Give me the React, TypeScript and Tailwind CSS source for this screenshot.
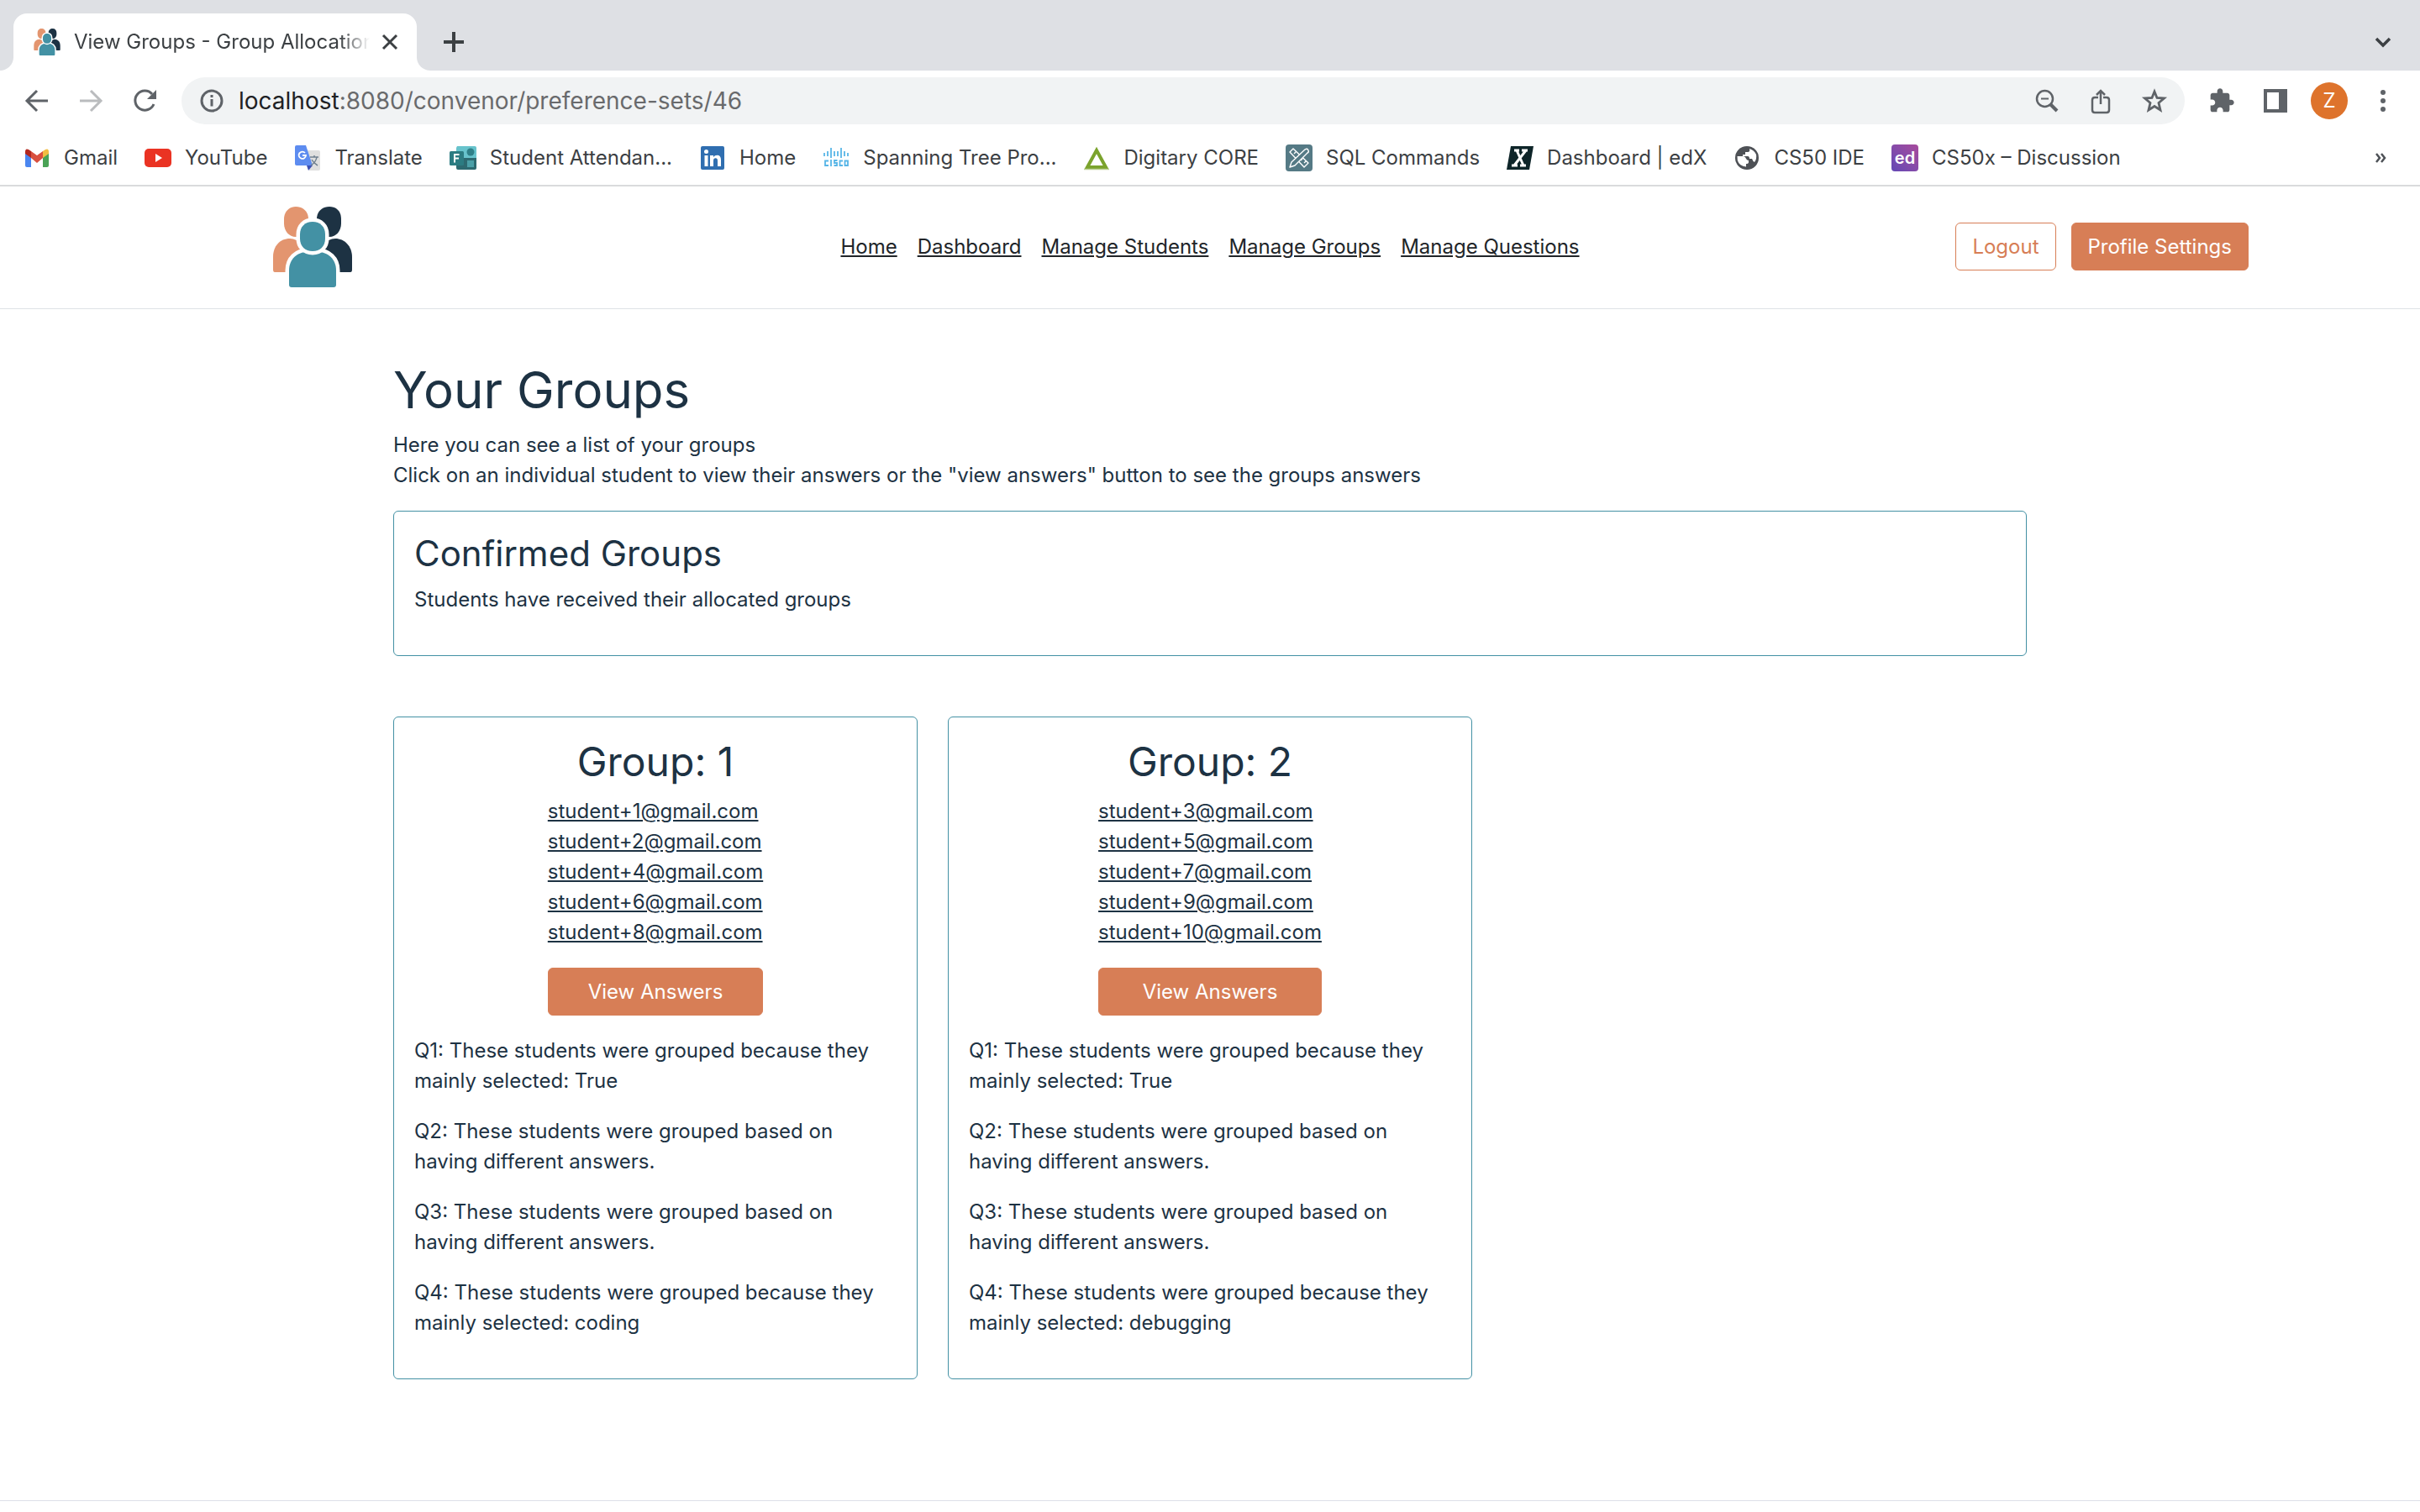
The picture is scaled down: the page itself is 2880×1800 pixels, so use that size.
import type { ReactNode } from "react";

function PeopleLogo({ className }: { className: string }) {
  return (
    <svg viewBox="0 0 96 96" className={className} aria-hidden="true">
      <g fill="#e3956f">
        <path d="M28 0C37 0 43 6 43 15V21C43 30 37 36 28 36C20 36 14 29 14 20V15C14 6 20 0 28 0Z" />
        <path d="M1 75V60C1 47 9 38 21 38Q29 38 36 46L34 62L17 78H3Q1 78 1 75Z" />
      </g>
      <g fill="#1d3243">
        <path d="M68 0C77 0 82 6 82 15V20C82 29 76 36 68 36C59 36 53 30 53 21V15C53 6 59 0 68 0Z" />
        <path d="M95 75V60C95 47 86 38 75 38Q67 38 60 46L62 62L79 78H93Q95 78 95 75Z" />
      </g>
      <g fill="#4391a4" stroke="#fff" strokeWidth="9" paintOrder="stroke">
        <path d="M20 93V76C20 62 30 54 42 54H54C66 54 76 62 76 76V93Q76 96 73 96H23Q20 96 20 93Z" />
        <path d="M48 18C57 18 63 24 63 33V38C63 47 57 53 48 53C39 53 33 47 33 38V33C33 24 39 18 48 18Z" />
      </g>
    </svg>
  );
}

const icon = "size-8 shrink-0";

const bookmarks: { label: string; art: ReactNode }[] = [
  {
    label: "Gmail",
    art: (
      <svg viewBox="0 0 32 32" className={icon} aria-hidden="true">
        <path fill="#4a86f0" d="M2 9L9 14V27H4Q2 27 2 25Z" />
        <path fill="#4aa356" d="M30 9L23 14V27H28Q30 27 30 25Z" />
        <path fill="#f2bd42" d="M23 8L26 6Q30 4 30 9V11L23 16Z" />
        <path fill="#b3281e" d="M9 8L6 6Q2 4 2 9V11L9 16Z" />
        <path fill="#d9503f" d="M9 8L16 13L23 8V16L16 22L9 16Z" />
      </svg>
    ),
  },
  {
    label: "YouTube",
    art: (
      <svg viewBox="0 0 32 32" className={icon} aria-hidden="true">
        <rect y="5" width="32" height="22" rx="5" fill="#ea3323" />
        <path d="M13 11L21 16L13 21Z" fill="#fff" />
      </svg>
    ),
  },
  {
    label: "Translate",
    art: (
      <svg viewBox="0 0 32 32" className={icon} aria-hidden="true">
        <path fill="#dfdfdf" d="M13 7H29Q31 7 31 9V29Q31 31 29 31H18Z" />
        <path fill="#3c50b5" d="M15 25H22L17 31Z" />
        <path fill="#5d8cf0" d="M3 1H14L22 25H3Q1 25 1 23V3Q1 1 3 1Z" />
        <path d="M19 15H29M24 13V15M27 15Q26 21 20 25M21 18Q23 22 28 25" stroke="#708090" strokeWidth="1.5" fill="none" />
        <path d="M13 10A4.2 4.2 0 1 0 14 13H10" stroke="#fff" strokeWidth="1.8" fill="none" />
      </svg>
    ),
  },
  {
    label: "Student Attendan...",
    art: (
      <svg viewBox="0 0 32 32" className={icon} aria-hidden="true">
        <path fill="#67c3cc" d="M9 2H30Q32 2 32 4V16H8V4Z" />
        <path fill="#2d6a71" d="M8 16H32V28Q32 30 30 30H10Q8 30 8 28Z" />
        <rect x="21" y="19" width="8" height="8" fill="#4ba0a8" />
        <circle cx="25" cy="9" r="4.500" fill="#2f8088" />
        <rect x="0" y="8" width="17" height="17" rx="1.500" fill="#2c7c82" />
        <path d="M6 21.500V12H11.500M6 16.500H11" stroke="#fff" strokeWidth="2" fill="none" />
      </svg>
    ),
  },
  {
    label: "Home",
    art: (
      <svg viewBox="0 0 32 32" className={icon} aria-hidden="true">
        <rect x="2" y="2" width="28" height="28" rx="2" fill="#2f6eb0" />
        <circle cx="8.500" cy="8.500" r="2.500" fill="#fff" />
        <path d="M6.500 13H10.500V26H6.500ZM13 13H17V15Q18.500 12.700 21.500 12.700Q26 12.700 26 18.500V26H22V19.500Q22 16.300 19.600 16.300Q17 16.300 17 19.500V26H13Z" fill="#fff" />
      </svg>
    ),
  },
  {
    label: "Spanning Tree Pro...",
    art: (
      <svg viewBox="0 0 32 32" className={icon} aria-hidden="true">
        <path d="M2 10V14M6 8V14M10 4V16M14 8V14M18 8V14M22 4V16M26 8V14M30 10V14" stroke="#58b6e7" strokeWidth="1.800" />
        <path d="M7 19.500H3V25H7M10 18V26M17.500 19H14V22H17V25H13.500M24 19.500H20.500V25H24M26.500 19.500H30V25H26.500Z" stroke="#58b6e7" strokeWidth="1.800" fill="none" />
      </svg>
    ),
  },
  {
    label: "Digitary CORE",
    art: (
      <svg viewBox="0 0 32 32" className={icon} aria-hidden="true">
        <path d="M16 7L27 27H5Z" fill="none" stroke="#7ba32d" strokeWidth="4" />
        <path d="M1 29.500H31" stroke="#bcd096" strokeWidth="1.500" />
      </svg>
    ),
  },
  {
    label: "SQL Commands",
    art: (
      <svg viewBox="0 0 32 32" className={icon} aria-hidden="true">
        <rect width="32" height="32" rx="4" fill="#557a85" />
        <g fill="#557a85" stroke="#fff" strokeWidth="1.400" strokeLinejoin="round">
          <path d="M9 5L27 22L22 27L5 9ZM12 9L10 11M24 20L22 22M20 17L18 19" />
          <path d="M23 6Q26 4 27 7Q28 9 26 10L11 25L5 27L7 21Z" />
        </g>
      </svg>
    ),
  },
  {
    label: "Dashboard | edX",
    art: (
      <svg viewBox="0 0 32 32" className={icon} aria-hidden="true">
        <path d="M5 2H32L27 30H0Z" fill="#0e2529" />
        <path d="M9 7H15M18 7H25M6 25H13M16 25H23M12 7L20 25M23 7L9 25" stroke="#fff" strokeWidth="3" fill="none" />
      </svg>
    ),
  },
  {
    label: "CS50 IDE",
    art: (
      <svg viewBox="0 0 32 32" className={icon} aria-hidden="true">
        <circle cx="16" cy="16" r="14" fill="#4e5156" />
        <path d="M4.500 14H11Q14 14 15 17Q16 19 18 19V21Q18 23 15 23V26.500Q7 26 4.800 19Z" fill="#fff" />
        <path d="M19 5Q20 9 17 9H14V12H11V14H17Q19 14 19 17H22Q23 20 25 21Q28 17 27 12Q25 7 19 5Z" fill="#fff" />
      </svg>
    ),
  },
  {
    label: "CS50x – Discussion",
    art: (
      <span className="flex size-8 shrink-0 items-center justify-center rounded-sm bg-linear-to-tr from-[#6347b5] to-[#a84a9c] text-xl font-semibold text-white" aria-hidden="true">
        ed
      </span>
    ),
  },
];

function BrowserChrome() {
  return (
    <header className="border-b-2 border-[#dadbdc] bg-white text-[#3c4043]">
      <div className="flex h-[84px] items-end bg-[#dee0e4]">
        <div className="h-4 w-4 bg-white">
          <div className="h-4 w-4 rounded-br-2xl bg-[#dee0e4]" />
        </div>
        <div className="flex h-[68px] w-[480px] items-center rounded-t-2xl bg-white pr-5 pl-6">
          <PeopleLogo className="size-8 shrink-0" />
          <span className="ml-4 min-w-0 flex-1 overflow-hidden mask-r-from-90% mask-r-to-100% text-2xl whitespace-nowrap">
            View Groups - Group Allocation
          </span>
          <button aria-label="Close tab" className="ml-3">
            <svg viewBox="0 0 24 24" className="size-6" aria-hidden="true">
              <path d="M4 4L20 20M20 4L4 20" stroke="#3c4043" strokeWidth="3" />
            </svg>
          </button>
        </div>
        <div className="h-4 w-4 bg-white">
          <div className="h-4 w-4 rounded-bl-2xl bg-[#dee0e4]" />
        </div>
        <button aria-label="New tab" className="mb-[22px] ml-4">
          <svg viewBox="0 0 24 24" className="size-6" aria-hidden="true">
            <path d="M12 0V24M0 12H24" stroke="#3c4043" strokeWidth="4" />
          </svg>
        </button>
        <button aria-label="Search tabs" className="mr-[34px] mb-[22px] ml-auto">
          <svg viewBox="0 0 20 24" className="h-6 w-5" aria-hidden="true">
            <path d="M2 8L10 16L18 8" stroke="#3c4043" strokeWidth="3.500" fill="none" />
          </svg>
        </button>
      </div>
      <div className="flex h-[72px] items-center pr-7 pl-7">
        <button aria-label="Back">
          <svg viewBox="0 0 32 32" className="size-8" aria-hidden="true">
            <path d="M29 16H5M16 4L4 16L16 28" stroke="#5f6368" strokeWidth="3" fill="none" />
          </svg>
        </button>
        <button aria-label="Forward" className="ml-8">
          <svg viewBox="0 0 32 32" className="size-8" aria-hidden="true">
            <path d="M3 16H27M16 4L28 16L16 28" stroke="#babcbe" strokeWidth="3" fill="none" />
          </svg>
        </button>
        <button aria-label="Reload" className="ml-8">
          <svg viewBox="0 0 32 32" className="size-8" aria-hidden="true">
            <path d="M27 20A11.500 11.500 0 1 1 25 8" stroke="#5f6368" strokeWidth="3" fill="none" />
            <path d="M30 3V14H19Z" fill="#5f6368" />
          </svg>
        </button>
        <div className="ml-7 flex h-14 flex-1 items-center rounded-full bg-[#f1f3f4] pr-5 pl-5">
          <svg viewBox="0 0 32 32" className="size-8" aria-hidden="true">
            <circle cx="16" cy="16" r="12" stroke="#5f6368" strokeWidth="3" fill="none" />
            <path d="M16 14V22.500M16 9V12" stroke="#5f6368" strokeWidth="3" />
          </svg>
          <span className="ml-4 flex-1 text-[28px] text-[#696a6c]">
            <span className="text-[#202124]">localhost</span>:8080/convenor/preference-sets/46
          </span>
          <div className="flex items-center gap-8">
            <button aria-label="Zoom">
              <svg viewBox="0 0 32 32" className="size-8" aria-hidden="true">
                <circle cx="13.500" cy="13.500" r="9.500" stroke="#5f6368" strokeWidth="2.500" fill="none" />
                <path d="M9 13.500H18" stroke="#5f6368" strokeWidth="2" />
                <path d="M20 20L28 28" stroke="#5f6368" strokeWidth="4" />
              </svg>
            </button>
            <button aria-label="Share">
              <svg viewBox="0 0 32 32" className="size-8" aria-hidden="true">
                <path d="M13 12H9Q6 12 6 15V27Q6 30 9 30H23Q26 30 26 27V15Q26 12 23 12H19M16 20V4M11 9L16 4L21 9" stroke="#5f6368" strokeWidth="2.500" fill="none" />
              </svg>
            </button>
            <button aria-label="Bookmark this page">
              <svg viewBox="0 0 32 32" className="size-8" aria-hidden="true">
                <path d="M16 5L19 12.500L27.500 13L21 18.500L23 27L16 22.500L9 27L11 18.500L4.500 13L13 12.500Z" stroke="#5f6368" strokeWidth="2.800" fill="none" />
              </svg>
            </button>
          </div>
        </div>
        <button aria-label="Extensions" className="ml-7">
          <svg viewBox="0 0 24 24" className="size-8" aria-hidden="true">
            <path fill="#5f6368" d="M20.500 11H19V7c0-1.100-.9-2-2-2h-4V3.500C13 2.120 11.880 1 10.500 1S8 2.120 8 3.500V5H4c-1.100 0-1.990.9-1.990 2v3.800H3.500c1.490 0 2.700 1.210 2.700 2.700s-1.210 2.700-2.700 2.700H2V20c0 1.100.9 2 2 2h3.800v-1.500c0-1.490 1.210-2.700 2.700-2.700s2.700 1.210 2.700 2.700V22H17c1.100 0 2-.9 2-2v-4h1.500c1.380 0 2.500-1.120 2.500-2.500S21.880 11 20.500 11z" />
          </svg>
        </button>
        <button aria-label="Side panel" className="ml-8">
          <svg viewBox="0 0 32 32" className="size-8" aria-hidden="true">
            <path fill="#5f6368" fillRule="evenodd" d="M2 2H30V30H2ZM6 6V26H20V6Z" />
          </svg>
        </button>
        <button aria-label="Profile" className="ml-[26px] flex size-11 items-center justify-center rounded-full bg-[#de732c] text-2xl text-white">
          Z
        </button>
        <button aria-label="Menu" className="ml-[26px]">
          <svg viewBox="0 0 32 32" className="size-8" aria-hidden="true">
            <g fill="#5f6368">
              <circle cx="16" cy="6" r="3" />
              <circle cx="16" cy="16" r="3" />
              <circle cx="16" cy="26" r="3" />
            </g>
          </svg>
        </button>
      </div>
      <nav aria-label="Bookmarks" className="flex h-16 items-center gap-8 pr-10 pl-7">
        {bookmarks.map((b) => (
          <a key={b.label} href="#" className="flex items-center gap-4 text-2xl whitespace-nowrap">
            {b.art}
            {b.label}
          </a>
        ))}
        <button aria-label="More bookmarks" className="ml-auto">
          <svg viewBox="0 0 14 14" className="size-3.5" aria-hidden="true">
            <path d="M2 2L6 7L2 12M8 2L12 7L8 12" stroke="#4d5156" strokeWidth="2.500" fill="none" />
          </svg>
        </button>
      </nav>
    </header>
  );
}

const navLinks = ["Home", "Dashboard", "Manage Students", "Manage Groups", "Manage Questions"];

const button = "rounded-md border border-[#d77e56] px-[19px] py-[9px] leading-[37px]";

function SiteHeader() {
  return (
    <header className="grid h-[146px] grid-cols-[1fr_auto_1fr] items-center border-b border-[#dee2e6] px-[204px] pb-0.5 text-2xl">
      <a href="#" aria-label="Group Allocation" className="pl-[120px]">
        <PeopleLogo className="size-24" />
      </a>
      <nav className="flex gap-6 text-[#212529]">
        {navLinks.map((l) => (
          <a key={l} href="#" className="underline">
            {l}
          </a>
        ))}
      </nav>
      <div className="flex justify-end gap-[18px]">
        <button className={`${button} text-[#d77e56]`}>Logout</button>
        <button className={`${button} bg-[#d77e56] text-white`}>Profile Settings</button>
      </div>
    </header>
  );
}

const same = (answer: string) => `These students were grouped because they mainly selected: ${answer}`;
const mixed = "These students were grouped based on having different answers.";

const groups = [
  { id: 1, students: [1, 2, 4, 6, 8], reasons: [same("True"), mixed, mixed, same("coding")] },
  { id: 2, students: [3, 5, 7, 9, 10], reasons: [same("True"), mixed, mixed, same("debugging")] },
];

export default function App() {
  return (
    <div className="flex min-h-screen flex-col bg-white font-['Inter',sans-serif]">
      <BrowserChrome />
      <SiteHeader />
      <main className="mx-auto w-full max-w-[1980px] px-[18px] pt-[60px] text-2xl leading-9 text-[#1d3243]">
        <h1 className="mb-3 text-6xl leading-[72px]">Your Groups</h1>
        <p className="mb-6">
          Here you can see a list of your groups
          <br />
          Click on an individual student to view their answers or the "view answers" button to see the groups answers
        </p>
        <section className="mb-[72px] rounded-md border border-[#4391a4] p-6">
          <h3 className="mb-3 text-[42px] leading-[51px]">Confirmed Groups</h3>
          <p className="mb-6">Students have received their allocated groups</p>
        </section>
        <div className="grid grid-cols-3 gap-9">
          {groups.map((g) => (
            <section key={g.id} className="rounded-md border border-[#4391a4] p-6">
              <h2 className="mb-3 text-center text-5xl leading-[58px]">{`Group: ${g.id}`}</h2>
              <div className="mx-auto mb-6 flex w-fit flex-col">
                {g.students.map((s) => (
                  <a key={s} href="#" className="underline">
                    {`student+${s}@gmail.com`}
                  </a>
                ))}
                <button className={`${button} mt-6 bg-[#d77e56] text-white`}>View Answers</button>
              </div>
              {g.reasons.map((r, i) => (
                <p key={i} className="mb-6">
                  {`Q${i + 1}: ${r}`}
                </p>
              ))}
            </section>
          ))}
        </div>
      </main>
      <footer className="mt-auto h-3.5 border-t border-[#dddfe8]" />
    </div>
  );
}
